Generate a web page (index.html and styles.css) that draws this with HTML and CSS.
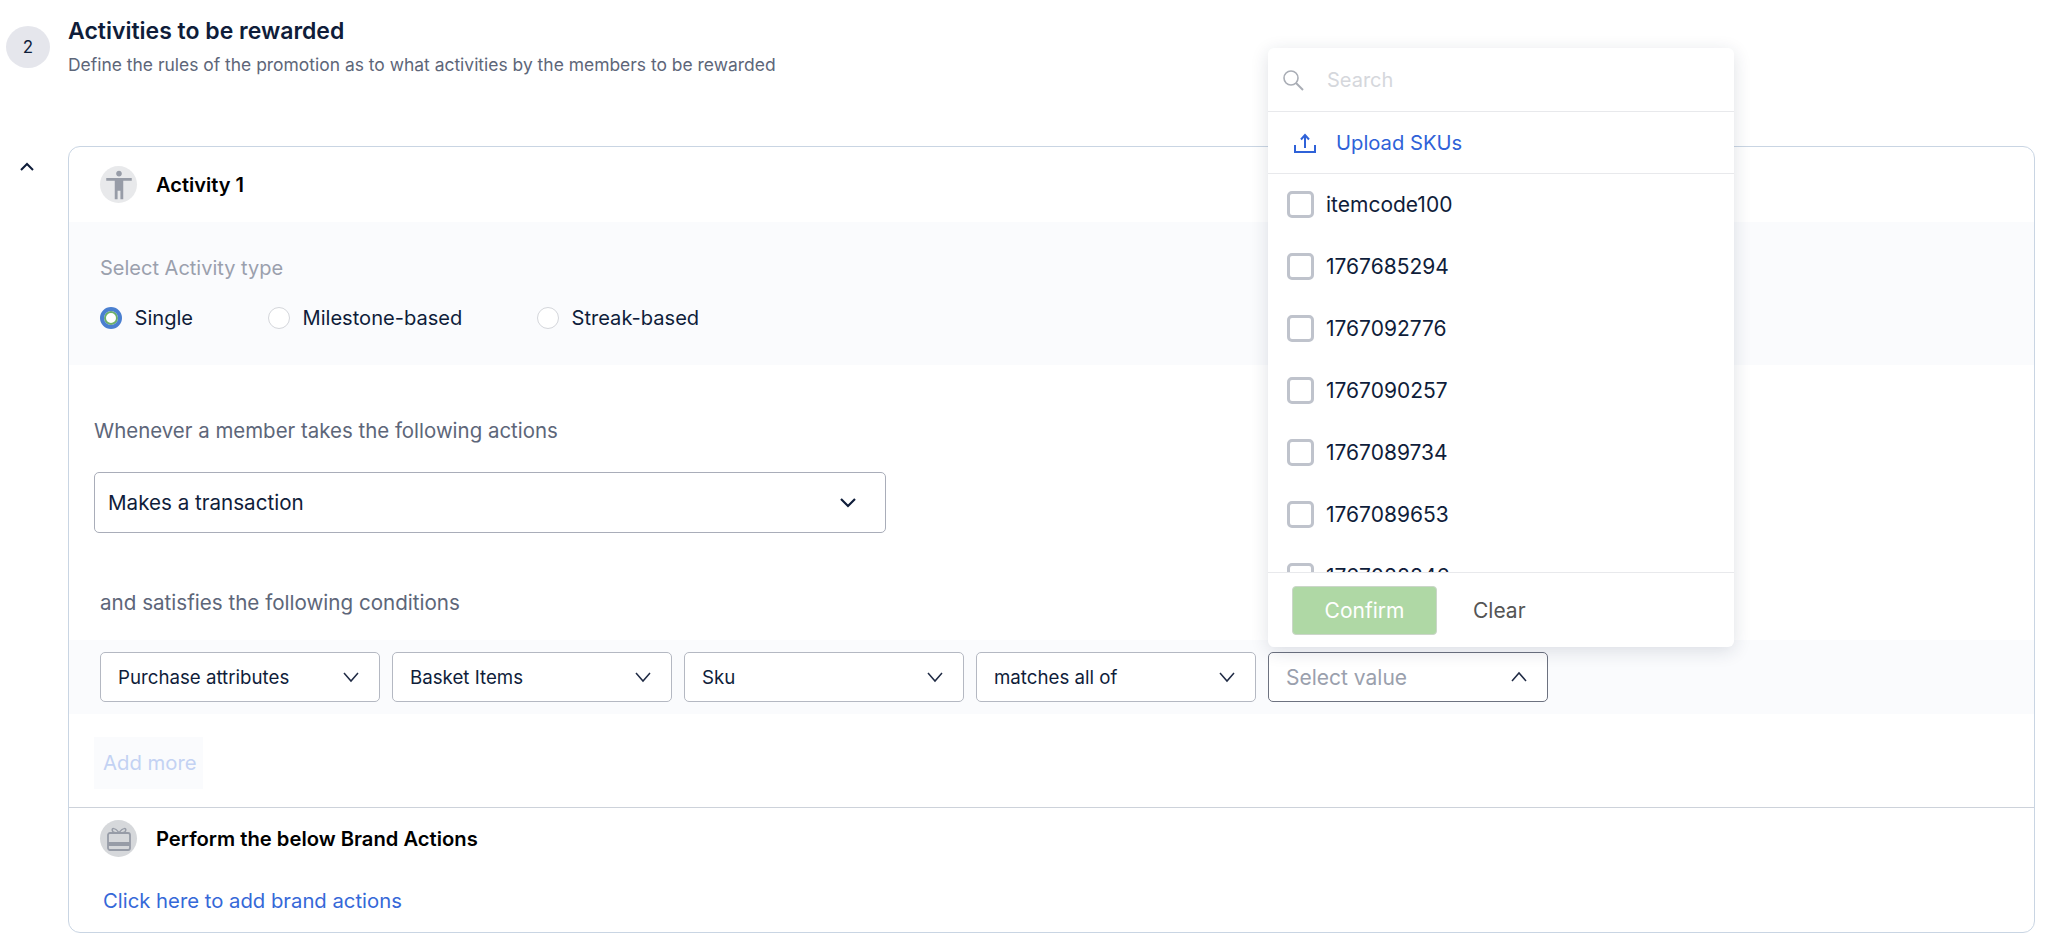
FILE: index.html
```html
<!DOCTYPE html>
<html lang="en">
<head>
<meta charset="utf-8">
<title>Activities to be rewarded</title>
<link rel="stylesheet" href="styles.css">
</head>
<body>
<header class="step-head">
  <div class="step-num">2</div>
  <div class="step-text">
    <h2 class="step-title">Activities to be rewarded</h2>
    <p class="step-sub">Define the rules of the promotion as to what activities by the members to be rewarded</p>
  </div>
</header>
<main class="activity-row">
  <div class="gutter">
    <svg class="collapse" viewBox="0 0 16 10" width="16" height="10"><path d="M2 8l6-6 6 6" fill="none" stroke="#0f1d3a" stroke-width="2"/></svg>
  </div>
  <section class="card">
    <div class="card-head">
      <span class="round-icon">
        <svg viewBox="0 0 24 24" width="34" height="34"><path fill="#979ca7" d="M12 2c1.100 0 2 .9 2 2s-.9 2-2 2-2-.9-2-2 .9-2 2-2zm9 7h-6v13h-2v-6h-2v6H9V9H3V7h18v2z"/></svg>
      </span>
      <span class="head-label">Activity 1</span>
    </div>
    <div class="type-panel">
      <div class="type-label">Select Activity type</div>
      <div class="radios">
        <label class="radio-item r-single"><span class="radio on"></span>Single</label>
        <label class="radio-item r-mile"><span class="radio"></span>Milestone-based</label>
        <label class="radio-item"><span class="radio"></span>Streak-based</label>
      </div>
    </div>
    <div class="actions">
      <div class="when-label">Whenever a member takes the following actions</div>
      <div class="main-select">
        <span>Makes a transaction</span>
        <svg viewBox="0 0 18 12" width="18" height="12"><path d="M2 2l7 7 7-7" fill="none" stroke="#0f1d3a" stroke-width="2.200"/></svg>
      </div>
      <div class="cond-label">and satisfies the following conditions</div>
    </div>
    <div class="cond-band">
      <div class="mini-select"><span>Purchase attributes</span><svg viewBox="0 0 18 12" width="18" height="12"><path d="M2 2l7 8 7-8" fill="none" stroke="#1f2a44" stroke-width="1.500"/></svg></div>
      <div class="mini-select"><span>Basket Items</span><svg viewBox="0 0 18 12" width="18" height="12"><path d="M2 2l7 8 7-8" fill="none" stroke="#1f2a44" stroke-width="1.500"/></svg></div>
      <div class="mini-select"><span>Sku</span><svg viewBox="0 0 18 12" width="18" height="12"><path d="M2 2l7 8 7-8" fill="none" stroke="#1f2a44" stroke-width="1.500"/></svg></div>
      <div class="mini-select"><span>matches all of</span><svg viewBox="0 0 18 12" width="18" height="12"><path d="M2 2l7 8 7-8" fill="none" stroke="#1f2a44" stroke-width="1.500"/></svg></div>
      <div class="mini-select open">
        <span class="placeholder">Select value</span>
        <svg viewBox="0 0 18 12" width="18" height="12"><path d="M2 10l7-8 7 8" fill="none" stroke="#1f2a44" stroke-width="1.500"/></svg>
        <div class="popup">
          <div class="pop-search">
            <svg viewBox="0 0 22 22" width="22" height="22"><circle cx="9" cy="9" r="7" fill="none" stroke="#a9adb5" stroke-width="1.600"/><path d="M14 14l7 7" stroke="#a9adb5" stroke-width="2"/></svg>
            <span>Search</span>
          </div>
          <div class="pop-upload">
            <svg viewBox="0 0 22 20" width="22" height="20"><path d="M11 15V3M7 6.500L11 2l4 4.500M1 12v7h20v-7" fill="none" stroke="#2f62d8" stroke-width="2"/></svg>
            <span>Upload SKUs</span>
          </div>
          <ul class="pop-list">
            <li><span class="check"></span>itemcode100</li>
            <li><span class="check"></span>1767685294</li>
            <li><span class="check"></span>1767092776</li>
            <li><span class="check"></span>1767090257</li>
            <li><span class="check"></span>1767089734</li>
            <li><span class="check"></span>1767089653</li>
            <li><span class="check"></span>1767088846</li>
          </ul>
          <div class="pop-foot">
            <button class="btn-confirm" type="button">Confirm</button>
            <button class="btn-clear" type="button">Clear</button>
          </div>
        </div>
      </div>
    </div>
    <div class="add-wrap"><span class="add-more">Add more</span></div>
    <div class="brand">
      <div class="brand-head">
        <span class="round-icon gift">
          <svg viewBox="0 0 26 26" width="26" height="26"><g fill="none" stroke="#979ca7" stroke-width="1.800"><rect x="2" y="7" width="22" height="17" rx="2"/><path d="M13 7C9 1 5 2 6.500 5 7 6.500 10 7 13 7zM13 7c4-6 8-5 6.500-2C19 6.500 16 7 13 7z" stroke-width="1.500"/></g><path d="M2 16h22v4H2z" fill="#979ca7"/></svg>
        </span>
        <span class="head-label wide">Perform the below Brand Actions</span>
      </div>
      <a class="brand-link" href="#">Click here to add brand actions</a>
    </div>
  </section>
</main>
</body>
</html>
```
FILE: styles.css
```css
* { box-sizing: border-box; }
html, body { margin: 0; padding: 0; background: #fff; }
body {
  font-family: Inter, "Liberation Sans", sans-serif;
  color: #0f1d3a;
  height: 948px;
  overflow: hidden;
}
.step-head { display: flex; height: 146px; }
.step-num {
  width: 44px; height: 42px; margin: 26px 0 0 6px; border-radius: 50%;
  background: #e5e6ec; display: flex; align-items: center; justify-content: center;
  font-size: 17px; flex: none;
}
.step-text { margin-left: 18px; padding-top: 16px; }
.step-title { margin: 0; font-size: 23px; font-weight: 600; line-height: 30px; }
.step-sub { margin: 7px 0 0; font-size: 17.450px; line-height: 24px; color: #5d6679; }
.activity-row { display: flex; }
.gutter { width: 68px; flex: none; padding: 16px 0 0 19px; }
.collapse { display: block; }
.card {
  width: 1967px; height: 787px; border: 1px solid #c9d5e3; border-radius: 12px;
}
.card-head { display: flex; align-items: center; height: 75px; padding-left: 31px; }
.round-icon {
  width: 37px; height: 37px; border-radius: 50%; background: #e8e9eb;
  display: flex; align-items: center; justify-content: center; flex: none;
}
.round-icon.gift { background: #d6d8db; }
.head-label { margin-left: 19px; font-size: 20px; font-weight: 600; color: #000; }
.head-label.wide { font-size: 20.200px; }
.type-panel { height: 143px; background: #fafbfd; padding: 33px 0 0 31px; }
.type-label { font-size: 20px; line-height: 26px; color: #9aa0ad; }
.radios { display: flex; margin-top: 24px; }
.radio-item { display: flex; align-items: center; font-size: 20.100px; line-height: 26px; }
.r-single { width: 168px; }
.r-mile { width: 269px; }
.radio {
  width: 22px; height: 22px; border-radius: 50%; border: 1px solid #d4d6db; background: #fff;
  margin-right: 12.500px; flex: none;
}
.radio.on { border: 4px solid #4a7fd0; box-shadow: inset 0 0 0 2px #6cb06a; }
.actions { padding: 53px 0 0 25px; height: 275px; }
.when-label { font-size: 20.450px; line-height: 26px; color: #5d6679; }
.main-select {
  width: 792px; height: 61px; margin-top: 28px; border: 1px solid #a9adb9; border-radius: 5px;
  display: flex; align-items: center; justify-content: space-between; padding: 0 28px 0 13px;
  font-size: 20.600px; background: #fff;
}
.cond-label { margin: 57px 0 0 6px; font-size: 20.600px; line-height: 26px; color: #5d6679; }
.cond-band {
  height: 74px; background: #fafbfd; display: flex; gap: 12px; padding: 12px 0 0 31px;
}
.mini-select {
  width: 280px; height: 50px; border: 1px solid #b4b8c2; border-radius: 5px; background: #fff;
  display: flex; align-items: center; justify-content: space-between; padding: 0 19px 0 17px;
  font-size: 18.700px; position: relative; flex: none;
}
.mini-select.open { border-color: #6d7280; }
.placeholder { color: #9aa0ad; font-size: 21px; }
.popup {
  position: absolute; left: -1px; bottom: 54px; width: 466px; height: 599px;
  background: #fff; border-radius: 6px; box-shadow: 0 4px 18px rgba(30, 40, 70, .14);
  display: flex; flex-direction: column; overflow: hidden;
}
.pop-search {
  height: 64px; flex: none; border-bottom: 1px solid #e8e9ec; display: flex; align-items: center;
  padding-left: 14px; font-size: 20px; color: #d5d7dc;
}
.pop-search span { margin-left: 23px; }
.pop-upload {
  height: 62px; flex: none; border-bottom: 1px solid #e8e9ec; display: flex; align-items: center;
  padding-left: 26px; color: #2f62d8; font-size: 20.200px;
}
.pop-upload span { margin-left: 20px; }
.pop-list { list-style: none; margin: -1px 0 0; padding: 0; flex: 1; overflow: hidden; min-height: 0; }
.pop-list li { height: 62px; display: flex; align-items: center; padding-left: 19px; font-size: 21px; }
.check {
  width: 27px; height: 27px; border: 3px solid #bfc3cc; border-radius: 5px; margin-right: 12px; flex: none;
}
.pop-foot {
  height: 75px; flex: none; border-top: 1px solid #e8e9ec; display: flex; align-items: flex-start;
  padding: 13px 0 0 24px;
}
.btn-confirm {
  width: 145px; height: 49px; background: #afd8a5; border: 1px solid #cbd6c9; border-radius: 4px;
  color: #fff; font: inherit; font-size: 21px;
}
.btn-clear {
  margin-left: 36px; height: 49px; padding: 0; border: 0; background: none;
  color: #555; font: inherit; font-size: 21px;
}
.add-wrap { height: 94px; padding: 23px 0 0 25px; border-bottom: 1px solid #cdd2da; }
.add-more {
  display: inline-block; width: 109px; height: 52px; line-height: 52px; padding-left: 9px;
  background: #fafbfd; color: #c3d2f3; font-size: 20.300px;
}
.brand { padding-left: 31px; }
.brand-head { display: flex; align-items: center; height: 61px; }
.brand-link {
  display: block; margin: 17px 0 0 3px; color: #3568d8; font-size: 20.300px; line-height: 30px; text-decoration: none;
}
```
